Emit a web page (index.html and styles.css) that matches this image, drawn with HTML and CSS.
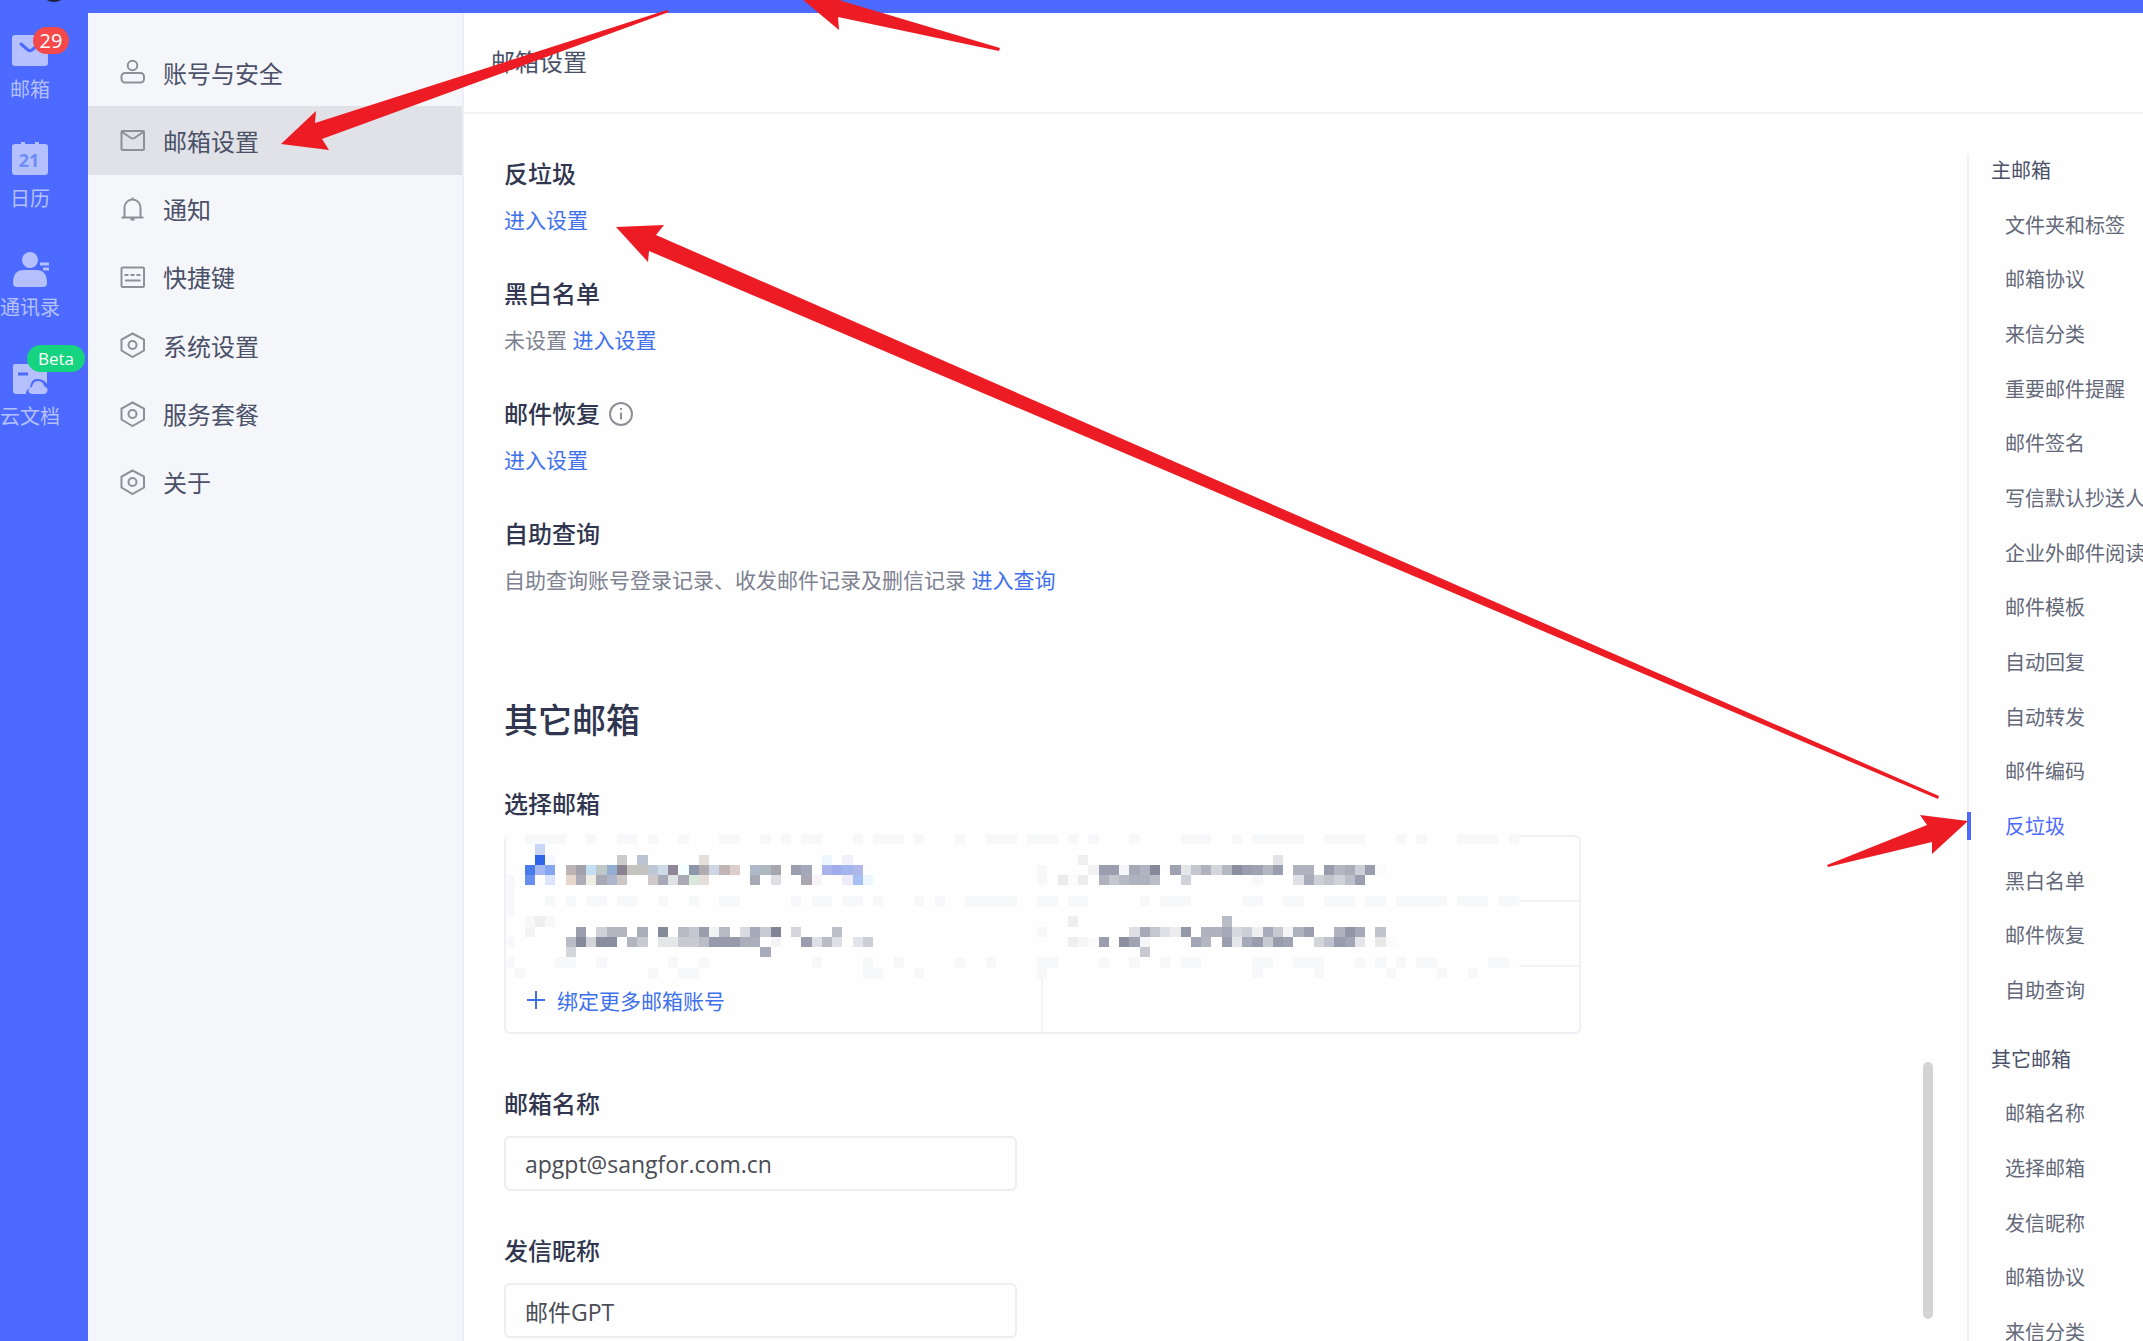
FILE: index.html
```html
<!DOCTYPE html>
<html lang="zh-CN">
<head>
    <meta charset="UTF-8">
    <meta name="viewport" content="width=device-width, initial-scale=1.0">
    <title>邮箱设置</title>
    <link rel="stylesheet" href="styles.css">
</head>
<body>
    <div class="topbar"></div>
    <div class="avatar"></div>

    <div class="layout">
        <nav class="rail">
            <a class="rail-item" href="#">
                <svg class="rail-icon" viewBox="0 0 36 36">
                    <rect x="0" y="3" width="36" height="31" rx="3" fill="#b4c0ff"/>
                    <path d="M9 12l7 6q2 1.500 4 0l7-6" fill="none" stroke="#4c6aff" stroke-width="3" stroke-linecap="round"/>
                </svg>
                <span>邮箱</span>
                <span class="badge badge-count">29</span>
            </a>
            <a class="rail-item" href="#">
                <svg class="rail-icon" viewBox="0 0 36 36">
                    <path d="M9 1h4v2h10v-2h4v2h6q3 0 3 3v25q0 3-3 3H3q-3 0-3-3V6q0-3 3-3h6z" fill="#b4c0ff"/>
                    <text x="17" y="26" text-anchor="middle" class="cal-day">21</text>
                </svg>
                <span>日历</span>
            </a>
            <a class="rail-item" href="#">
                <svg class="rail-icon" viewBox="0 -2 36 36" fill="#b4c0ff">
                    <circle cx="18" cy="8" r="8"/>
                    <path d="M1 31q0-13 11-13h12q11 0 11 13q0 4-4 4H5q-4 0-4-4z"/>
                    <path d="M28 12h9M31 17h6" stroke="#b4c0ff" stroke-width="3"/>
                </svg>
                <span>通讯录</span>
            </a>
            <a class="rail-item" href="#">
                <svg class="rail-icon" viewBox="0 -2 36 36">
                    <path d="M3 3h29q3 0 3 3v27H4q-3 0-3-3V5q0-2 2-2z" fill="#b4c0ff"/>
                    <path d="M6 13h10" stroke="#4c6aff" stroke-width="3"/>
                    <path d="M14 35q-1-6 4-8q1-10 8-9q7 0 10 7v10z" fill="#4c6aff"/>
                    <path d="M20 33q-5-1-3-5q1-2 3-2q1-6 6-6q5 0 6 5q5 2 3 6q-1 2-3 2z" fill="#b4c0ff"/>
                </svg>
                <span>云文档</span>
                <span class="badge badge-beta">Beta</span>
            </a>
        </nav>

        <nav class="side">
            <a class="side-item" href="#">
                <svg class="side-icon" viewBox="0 0 26 26"><circle cx="12.500" cy="6.500" r="4.800"/><rect x="1.500" y="14" width="22.500" height="9.500" rx="3.500"/></svg>
                账号与安全
            </a>
            <a class="side-item active" href="#">
                <svg class="side-icon" viewBox="0 0 26 26"><rect x="1.500" y="4" width="22.500" height="19" rx="1"/><path d="M2 5l9 6q1.700 1 3.400 0l9-6"/></svg>
                邮箱设置
            </a>
            <a class="side-item" href="#">
                <svg class="side-icon" viewBox="0 0 26 26"><path d="M4.500 21.500V11.500a8 8 0 0 1 16 0v10M1.500 21.500h22M12.500 1.500v2M10.500 23.500h4"/></svg>
                通知
            </a>
            <a class="side-item" href="#">
                <svg class="side-icon" viewBox="0 0 26 26"><rect x="1.500" y="3.500" width="22.500" height="19.500" rx="1"/><path d="M4.500 11h4M10.500 11h4M16.500 11h4M5 16.500h15.500"/></svg>
                快捷键
            </a>
            <a class="side-item" href="#">
                <svg class="side-icon" viewBox="0 0 26 26"><path d="M12.500 1.500L24 7.500v11L12.500 25 1.500 18.500v-11z"/><circle cx="12.500" cy="13" r="4"/></svg>
                系统设置
            </a>
            <a class="side-item" href="#">
                <svg class="side-icon" viewBox="0 0 26 26"><path d="M12.500 1.500L24 7.500v11L12.500 25 1.500 18.500v-11z"/><circle cx="12.500" cy="13" r="4"/></svg>
                服务套餐
            </a>
            <a class="side-item" href="#">
                <svg class="side-icon" viewBox="0 0 26 26"><path d="M12.500 1.500L24 7.500v11L12.500 25 1.500 18.500v-11z"/><circle cx="12.500" cy="13" r="4"/></svg>
                关于
            </a>
        </nav>

        <main class="main">
            <header class="main-header">邮箱设置</header>
            <div class="main-body">
                <div class="content">
                    <section class="block">
                        <h3>反垃圾</h3>
                        <p><a href="#">进入设置</a></p>
                    </section>
                    <section class="block">
                        <h3>黑白名单</h3>
                        <p>未设置 <a href="#">进入设置</a></p>
                    </section>
                    <section class="block">
                        <h3>邮件恢复
                            <svg class="info-icon" viewBox="0 0 24 24"><circle cx="12" cy="12" r="11"/><path d="M12 6v2M12 10.500v7"/></svg>
                        </h3>
                        <p><a href="#">进入设置</a></p>
                    </section>
                    <section class="block">
                        <h3>自助查询</h3>
                        <p>自助查询账号登录记录、收发邮件记录及删信记录 <a href="#">进入查询</a></p>
                    </section>

                    <h2>其它邮箱</h2>

                    <h3>选择邮箱</h3>
                    <div class="accounts">
                        <div class="account"></div>
                        <div class="account"></div>
                        <div class="account"></div>
                        <div class="account"></div>
                        <div class="account">
                            <button type="button" class="bind-btn">
                                <svg class="plus-icon" viewBox="0 0 18 18"><path d="M9 0v18M0 9h18"/></svg>
                                绑定更多邮箱账号
                            </button>
                        </div>
                        <div class="account"></div>
                        <svg class="mosaic" id="mosaic" viewBox="0 0 99 14" preserveAspectRatio="none" shape-rendering="crispEdges"></svg>
                    </div>

                    <div class="field">
                        <label for="mailName">邮箱名称</label>
                        <input type="text" id="mailName" name="mailName" value="apgpt@sangfor.com.cn">
                    </div>
                    <div class="field">
                        <label for="nickName">发信昵称</label>
                        <input type="text" id="nickName" name="nickName" value="邮件GPT">
                    </div>
                    <div class="scroll-thumb"></div>
                </div>

                <nav class="outline">
                    <div class="outline-group outline-main">
                        <a class="outline-title" href="#">主邮箱</a>
                        <a href="#">文件夹和标签</a>
                        <a href="#">邮箱协议</a>
                        <a href="#">来信分类</a>
                        <a href="#">重要邮件提醒</a>
                        <a href="#">邮件签名</a>
                        <a href="#">写信默认抄送人</a>
                        <a href="#">企业外邮件阅读</a>
                        <a href="#">邮件模板</a>
                        <a href="#">自动回复</a>
                        <a href="#">自动转发</a>
                        <a href="#">邮件编码</a>
                        <a class="current" href="#">反垃圾</a>
                        <a href="#">黑白名单</a>
                        <a href="#">邮件恢复</a>
                        <a href="#">自助查询</a>
                    </div>
                    <div class="outline-group outline-other">
                        <a class="outline-title" href="#">其它邮箱</a>
                        <a href="#">邮箱名称</a>
                        <a href="#">选择邮箱</a>
                        <a href="#">发信昵称</a>
                        <a href="#">邮箱协议</a>
                        <a href="#">来信分类</a>
                    </div>
                </nav>
            </div>
        </main>
    </div>

    <!-- guide arrows -->
    <svg class="arrows" viewBox="0 0 2143 1341">
        <polygon points="281,144 316,111 315,123 667,10 669,12 322,139 329,150"/>
        <polygon points="796,-6 839,30 838,17 999,51 1000,48 842,1 830,-6"/>
        <polygon points="616,227 664,225 656,235 1939,796 1938,799 649,251 648,262"/>
        <polygon points="1968,821 1920,815 1927,825 1827,865 1828,867 1932,842 1932,854"/>
    </svg>

    <script src="script.js"></script>
</body>
</html>
```
FILE: styles.css
```css
* {
    box-sizing: border-box;
}

body {
    margin: 0;
    height: 100vh;
    overflow: hidden;
    display: flex;
    flex-direction: column;
    position: relative;
    background-color: #fefefe;
    color: #4b5168;
    font-family: "Open Sans", "Noto Sans CJK SC", sans-serif;
    font-size: 21px;
}

a {
    color: #3f70ee;
    text-decoration: none;
}

h2,
h3,
p {
    margin: 0;
}

.topbar {
    flex: none;
    height: 13px;
    background-color: #4c6aff;
}

.avatar {
    position: absolute;
    left: 40px;
    top: -26px;
    width: 28px;
    height: 28px;
    border-radius: 50%;
    background-color: #1c2238;
}

.layout {
    flex: 1;
    display: flex;
    min-height: 0;
}

/* left rail */
.rail {
    flex: none;
    width: 88px;
    padding-top: 19px;
    background-color: #4c6aff;
}

.rail-item {
    position: relative;
    display: flex;
    flex-direction: column;
    align-items: center;
    gap: 8px;
    width: 60px;
    margin-bottom: 37px;
    color: #b4c0ff;
    font-size: 20px;
    line-height: 28px;
    white-space: nowrap;
}

.rail-icon {
    width: 36px;
    height: 36px;
    overflow: visible;
}

.cal-day {
    fill: #6f8df5;
    font-size: 18px;
    font-weight: bold;
}

.badge {
    position: absolute;
    height: 27px;
    border-radius: 14px;
    color: #fff;
    text-align: center;
    line-height: 27px;
}

.badge-count {
    left: 33px;
    top: -5px;
    width: 36px;
    background-color: #f5484b;
}

.badge-beta {
    left: 27px;
    top: -14px;
    width: 58px;
    background-color: #15d37f;
    font-size: 17px;
}

/* settings menu */
.side {
    flex: none;
    display: grid;
    grid-template-rows: repeat(7, 1fr);
    align-self: stretch;
    align-content: start;
    width: 376px;
    padding-top: 25px;
    padding-bottom: calc(100vh - 516px);
    background-color: #f5f6fa;
    border-right: 2px solid #edeff4;
}

.side-item {
    display: flex;
    align-items: center;
    gap: 17px;
    padding-left: 32px;
    color: #4b5168;
    font-size: 24px;
}

.side-item.active {
    background-color: #e1e2e7;
}

.side-icon {
    width: 26px;
    height: 26px;
    fill: none;
    stroke: #8d9097;
    stroke-width: 2;
}

/* main */
.main {
    flex: 1;
    min-width: 0;
    display: flex;
    flex-direction: column;
}

.main-header {
    flex: none;
    height: 101px;
    padding-left: 27px;
    border-bottom: 2px solid #f2f4f6;
    font-size: 24px;
    line-height: 98px;
}

.main-body {
    flex: 1;
    min-height: 0;
    display: flex;
}

.content {
    position: relative;
    flex: 1;
    min-width: 0;
    padding: 38px 40px 0;
}

h3,
.field label {
    display: flex;
    align-items: center;
    gap: 9px;
    color: #30364f;
    font-size: 24px;
    font-weight: 500;
    line-height: 44px;
}

h2 {
    margin: 92px 0 38px;
    color: #30364f;
    font-size: 34px;
    font-weight: 500;
    line-height: 48px;
}

.block {
    margin-bottom: 28px;
}

.block p {
    color: #7d8190;
    line-height: 48px;
}

.info-icon {
    width: 24px;
    height: 24px;
    fill: none;
    stroke: #8d9097;
    stroke-width: 2;
}

.accounts {
    position: relative;
    display: grid;
    grid-template-columns: 1fr 1fr;
    grid-auto-rows: 65px;
    width: 100%;
    max-width: 1077px;
    margin: 9px 0 48px;
    border: 2px solid #eff0f5;
    border-radius: 6px;
}

.account {
    display: flex;
    align-items: center;
    padding-left: 21px;
    border-bottom: 2px solid #f2f3f7;
}

.account:nth-child(odd) {
    border-right: 2px solid #f2f3f7;
}

.account:nth-child(n + 5) {
    border-bottom: none;
}

.bind-btn {
    display: flex;
    align-items: center;
    gap: 12px;
    padding: 0;
    border: none;
    background: none;
    color: #3f70ee;
    font-family: inherit;
    font-size: 21px;
    cursor: pointer;
}

.plus-icon {
    width: 18px;
    height: 18px;
    fill: none;
    stroke: #3f70ee;
    stroke-width: 2;
}

.mosaic {
    position: absolute;
    left: -2px;
    top: -3px;
    width: 1015px;
    height: 144px;
}

.field {
    max-width: 513px;
    margin-bottom: 38px;
}

.field input {
    display: block;
    width: 100%;
    height: 55px;
    margin-top: 10px;
    padding: 0 19px;
    border: 2px solid #eceef4;
    border-radius: 6px;
    background-color: #fefefe;
    color: #4a4d55;
    font-family: inherit;
    font-size: 23px;
}

.field input:focus {
    outline: none;
    border-color: #4c6aff;
}

.scroll-thumb {
    position: absolute;
    right: 34px;
    bottom: 22px;
    width: 10px;
    height: 257px;
    border-radius: 5px;
    background-color: #d3d4d6;
}

/* right outline */
.outline {
    flex: none;
    width: 176px;
    margin-top: 40px;
    border-left: 2px solid #f0f1f5;
}

.outline-group {
    display: grid;
    grid-auto-rows: 1fr;
    margin-bottom: 14px;
}

.outline-main {
    height: 875px;
    margin-top: -12px;
}

.outline-other {
    height: 328px;
}

.outline-group a {
    position: relative;
    display: flex;
    align-items: center;
    padding-left: 36px;
    color: #636879;
    font-size: 20px;
    white-space: nowrap;
}

.outline-group .outline-title {
    padding-left: 22px;
    color: #4b5168;
}

.outline-group .current {
    color: #4c6aff;
}

.current::before {
    content: "";
    position: absolute;
    left: -2px;
    width: 4px;
    height: 28px;
    background-color: #4c6aff;
}

.arrows {
    position: absolute;
    left: 0;
    top: 0;
    width: 2143px;
    height: 1341px;
    fill: #ed1c24;
    pointer-events: none;
}
```
FILE: script.js
```javascript
var svg = document.getElementById("mosaic");

function cell(x, y, w, h, color) {
    var r = document.createElementNS("http://www.w3.org/2000/svg", "rect");
    r.setAttribute("x", x);
    r.setAttribute("y", y);
    r.setAttribute("width", w);
    r.setAttribute("height", h);
    r.setAttribute("fill", color);
    svg.appendChild(r);
}

// faint cells over the borders: row -> [column, length]
var faint = {
    0: [[2,4],[8,1],[11,2],[14,1],[17,1],[21,2],[25,1],[27,1],[29,2],[34,1],[36,3],[40,1],[44,1],[47,3],[51,3],[55,1],[57,1],[61,1],[66,3],[71,1],[73,5],[80,4],[87,1],[89,1],[93,4],[98,1]],
    3: [[52,1]],
    4: [[52,1]],
    6: [[4,1],[6,1],[8,2],[11,2],[15,1],[18,1],[21,2],[28,1],[30,2],[33,2],[36,1],[40,1],[42,1],[45,5],[52,2],[55,2],[62,1],[64,3],[72,2],[76,2],[80,3],[84,2],[87,5],[93,3],[97,2]],
    9: [[52,1]],
    12: [[5,2],[9,1],[16,1],[19,1],[30,1],[35,1],[38,1],[44,1],[47,1],[52,2],[58,1],[61,1],[64,1],[66,2],[73,2],[77,3],[83,1],[85,1],[87,1],[89,2],[96,2]],
    13: [[1,1],[14,1],[17,2],[35,2],[40,1],[52,1],[73,1],[79,1],[86,1],[91,1],[94,1]]
};

// colored runs: [row, first column, colors]
var runs = [
    [1, 3, "c9d6f7"],
    [2, 3, "2c63e8 f3f6fe"],
    [2, 11, "c9cbcd"],
    [2, 13, "b8c4d2"],
    [2, 19, "e6e0da"],
    [2, 31, "ecf8fe"],
    [2, 33, "f1f1fb"],
    [2, 56, "f0f0f1"],
    [2, 75, "e3e4e9"],
    [3, 2, "4a7bea a3b8f2 86a5f0"],
    [3, 6, "bdb5b5 a2a1ab c5dff5 bfc8c8 94aed2 8b828f c5c3c0 c5c3c0 bdc8d6 cedae6 8f8798 f5feff 8d97aa b0acb0 cfd6e6 c3b5b5 dccfcb"],
    [3, 24, "aebaca adb9be a6a6af"],
    [3, 28, "9b9eaf a3a8ba"],
    [3, 31, "aab4e8 a0acec a3b6ee b0b8ea"],
    [3, 57, "f2f2f2 9a9eae 9a9eae f6f6f8 a6a9b8 b0b4c0 858999"],
    [3, 65, "9da1b0 e5e6ea c4c7cf b0b3bf d3d5db b5b9c3 8b8fa0 9a9dad 9fa2b1 b4b7c2 9b9eae"],
    [3, 77, "b0b3bf b0b3bf"],
    [3, 80, "989cac b4b7c2 aaaebb cdcfd6 9a9eae fbfbfb"],
    [4, 2, "6790ee"],
    [4, 4, "dae5fc"],
    [4, 6, "e8d6cc acadb7 efede4 a7aab5 adb6ca cdc6c6"],
    [4, 14, "cec8c8 a7a8b8 e1e1e8 aaaab4 d9e8dd e5dfdc"],
    [4, 24, "a8a9b6"],
    [4, 26, "dddde3"],
    [4, 29, "aaa6b2 f8f3f9"],
    [4, 33, "efebf8 a6c0f1 ecf8ff"],
    [4, 54, "ebebec fbfbfb ececed"],
    [4, 58, "b0b3bf c4c7cf b7bac4 aeb1be aeb1be bbbec8"],
    [4, 66, "d0d2d9"],
    [4, 73, "f7f8fa"],
    [4, 77, "dfe0e5 a8abb9 cdcfd6 c2c5cd d0d2d9 bcbfc9 9a9eae"],
    [8, 2, "f8f8f8 efefef f8f8f8"],
    [8, 55, "efefef"],
    [8, 70, "b9bdc8"],
    [9, 2, "f3f3f3"],
    [9, 7, "9a9eae"],
    [9, 9, "d0d1d7 b2b5c0 b2b5c0"],
    [9, 13, "aaadba"],
    [9, 15, "858a9b"],
    [9, 17, "b7bac4 c4c7cf 989cab f2f3f5 b7bac4"],
    [9, 23, "dadbe0 a6aab8 c8cad2 7f8497"],
    [9, 28, "d5d6dc"],
    [9, 32, "bcbfc9"],
    [9, 61, "dfe0e5 a6a9b7 c4c7cf dfe0e5 ececef 9498a8"],
    [9, 68, "b0b3bf b0b3bf a6a9b7 d8d9df cdcfd6 efeff2 a8abb9 c8cad2 f4f4f6 aeb1be 9a9eae"],
    [9, 81, "b0b3bf 9195a6 a6a9b7"],
    [9, 85, "c0c3cd"],
    [10, 6, "bbbdc6 868b9c d3d4da 898e9f 898e9f"],
    [10, 12, "b2b5c0 c8cad2"],
    [10, 15, "e5e6ea e5e6ea c8cad2 c8cad2 bbbdc6 969aaa 969aaa 969aaa abaebb abaebb"],
    [10, 26, "f4f4f6"],
    [10, 29, "9a9eae dfe0e5 babdc7 dfe0e5"],
    [10, 34, "e3e4e9 cdcfd6"],
    [10, 55, "efefef f6f6f6 fafafa 9a9eae"],
    [10, 60, "8b8fa0 a0a4b3 f6f6f8"],
    [10, 67, "a3a6b5 b4b7c2"],
    [10, 70, "9a9eae e6e7eb a6a9b7 989cac c8cad2 989cac 9fa2b1"],
    [10, 79, "d3d5db c0c3cd 989cac a3a6b5 e5e6ea"],
    [10, 85, "e8e8e8 fbfbfb"],
    [11, 6, "d3d5db"],
    [11, 25, "a8abb9"],
    [11, 62, "c8cad2"]
];

cell(0.3, 0, 98.7, 14, "#fefefe");
cell(0.3, 4, 0.7, 4, "#f7f8fa");
cell(0.3, 10, 0.7, 1, "#f7f8fa");
cell(0.3, 12, 0.7, 1, "#f7f8fa");

for (var row in faint) {
    faint[row].forEach(function(f) {
        cell(f[0], row, f[1], 1, "#f7f8fa");
    });
}

runs.forEach(function(run) {
    run[2].split(" ").forEach(function(color, i) {
        cell(run[1] + i, run[0], 1, 1, "#" + color);
    });
});
```
